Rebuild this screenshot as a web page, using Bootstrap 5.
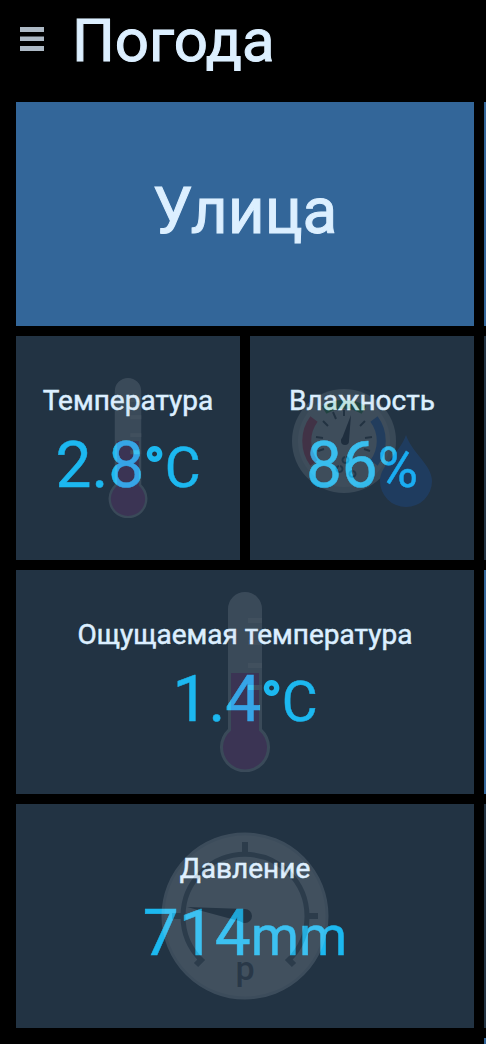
<!DOCTYPE html>
<html lang="ru">
<head>
<meta charset="utf-8">
<meta name="viewport" content="width=device-width, initial-scale=1">
<title>Погода</title>
<link rel="stylesheet" href="https://cdn.jsdelivr.net/npm/bootstrap@5.3.0/dist/css/bootstrap.min.css">
<style>
  body { background: #000; color: #dcefff; font-family: Roboto, "Liberation Sans", sans-serif; overflow: hidden; }
  .menu-btn { width: 24px; height: 24px; color: #adb9c5; border: 0; border-radius: 0; line-height: 1; }
  .page-title { font-size: 60px; line-height: 74px; font-weight: 400; -webkit-text-stroke: 1px; }
  .wall { display: grid; grid-template-columns: minmax(0, 1fr) 2px; gap: 10px; padding: 24px 0 0 16px; }
  .board { display: grid; grid-template-columns: repeat(2, minmax(0, 1fr)); gap: 10px; align-content: start; }
  .next-board { display: grid; grid-template-rows: repeat(4, 224px) 6px; gap: 10px; }
  .tile { height: 224px; background: #223343; }
  .tile-wide { grid-column: span 2; }
  .bg-head { background: #336699; }
  .bg-dim { background: #223343; }
  .head-text { font-size: 64px; line-height: 76px; font-weight: 400; -webkit-text-stroke: 1px; }
  .tile-label { font-size: 28px; line-height: 32px; font-weight: 400; -webkit-text-stroke: 0.5px; padding-top: 49px; }
  .tile-value { font-size: 64px; line-height: 76px; margin-top: 11px; color: #1cb8f0; -webkit-text-stroke: 0.5px; }
  .unit { font-size: 55px; }
  .degree { -webkit-text-stroke: 2px; }
  .art { position: absolute; inset: 0; margin: auto; width: 180px; height: 180px; opacity: .15; pointer-events: none; }
  .art-sm { width: 140px; height: 140px; }
</style>
</head>
<body>
<header class="d-flex align-items-center pt-1 px-3">
  <button type="button" class="menu-btn btn p-0 ms-1 mb-1" aria-label="Меню">
    <svg class="d-block" width="24" height="24" viewBox="0 0 24 24" fill="currentColor" aria-hidden="true"><path d="M0 0h24v5H0zM0 9.500h24v4.500H0zM0 19h24v5H0z"/></svg>
  </button>
  <h1 class="page-title mb-0 ms-4 ps-1">Погода</h1>
</header>

<svg class="d-none" aria-hidden="true">
  <symbol id="thermometer" viewBox="0 0 180 180">
    <path fill="#c3ccd8" d="M73 17a17 17 0 0 1 34 0v120a25 25 0 1 1-34 0z"/>
    <path fill="#c83cb8" d="M76 81h28v57.500a22 22 0 1 1-28 0z"/>
    <path fill="#f4f6f8" d="M93 26h14v5H93zM93 48h14v5H93zM93 71h14v5H93zM93 93h14v5H93z"/>
  </symbol>
</svg>

<main class="wall">
  <div class="board">
    <div class="tile tile-wide bg-head d-flex align-items-center justify-content-center"><h2 class="head-text mb-1">Улица</h2></div>

    <section class="tile position-relative text-center">
      <div class="tile-label">Температура</div>
      <div class="tile-value">2.8<span class="unit"><span class="degree">°</span>C</span></div>
      <svg class="art art-sm" aria-hidden="true"><use href="#thermometer"/></svg>
    </section>

    <section class="tile position-relative text-center">
      <div class="tile-label">Влажность</div>
      <div class="tile-value">86<span class="unit">%</span></div>
      <svg class="art art-sm" viewBox="0 0 140 140" aria-hidden="true">
        <circle cx="52" cy="63" r="52" fill="#bcc4cc"/>
        <circle cx="52" cy="63" r="46" fill="#dce0e4"/>
        <g fill="none" stroke-width="9">
          <path stroke="#f03058" d="M22 41a37 37 0 0 0 0 44"/>
          <path stroke="#2478f0" d="M82 41a37 37 0 0 1 0 44"/>
          <path stroke="#1fa03c" d="M32 32a37 37 0 0 1 40 0"/>
        </g>
        <path fill="none" stroke="#28323c" stroke-width="2" d="M24 59l7 1M31 43l5 5M41 34l3 7M52 32v6M73 43l-5 5M80 59l-7 1M26 73l6-2M78 73l-6-2"/>
        <path fill="none" stroke="#28506e" stroke-width="2" d="M48 88a3 3 0 1 1-1 0M61 93a3 3 0 1 1-1 0M54 79a3 3 0 1 1-1 0"/>
        <path fill="#101425" d="M59 37l-2 26h-8z"/>
        <circle cx="53" cy="63" r="4" fill="#101425"/>
        <path fill="#1470ff" d="M114 57c6 18 26 30 26 46a26 26 0 0 1-52 0c0-16 20-28 26-46z"/>
      </svg>
    </section>

    <section class="tile tile-wide position-relative text-center">
      <div class="tile-label">Ощущаемая температура</div>
      <div class="tile-value">1.4<span class="unit"><span class="degree">°</span>C</span></div>
      <svg class="art" aria-hidden="true"><use href="#thermometer"/></svg>
    </section>

    <section class="tile tile-wide position-relative text-center">
      <div class="tile-label">Давление</div>
      <div class="tile-value">714<span class="unit">mm</span></div>
      <svg class="art" viewBox="0 0 180 180" aria-hidden="true">
        <circle cx="90" cy="90" r="82" fill="#f0f5fa" stroke="#d2dae2" stroke-width="3"/>
        <path fill="none" stroke="#64717e" stroke-width="5" d="M46 134a62 62 0 1 1 88 0"/>
        <path fill="none" stroke="#64717e" stroke-width="6" d="M90 16v11M17 90h10M153 90h10M48 132l-7 7M132 132l7 7"/>
        <path fill="#323c46" d="M32 81l58 2v14l-6-2z"/>
        <circle cx="90" cy="90" r="7" fill="#323c46"/>
        <text x="90" y="154" text-anchor="middle" font-size="34" font-weight="500" fill="#505a64">p</text>
      </svg>
    </section>
  </div>
  <div class="next-board" aria-hidden="true">
    <div class="bg-head"></div><div class="bg-dim"></div><div class="bg-head"></div><div class="bg-dim"></div><div class="bg-head"></div>
  </div>
</main>
<script src="https://cdn.jsdelivr.net/npm/bootstrap@5.3.0/dist/js/bootstrap.bundle.min.js"></script>
</body>
</html>
